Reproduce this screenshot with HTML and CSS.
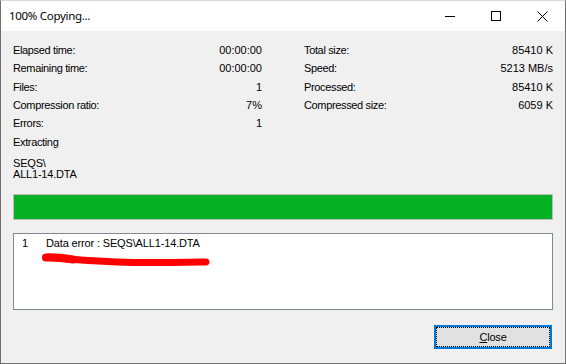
FILE: index.html
```html
<!DOCTYPE html>
<html lang="en">
<head>
    <meta charset="UTF-8">
    <title>100% Copying...</title>
    <link rel="stylesheet" href="styles.css">
</head>
<body>
    <div class="window">
        <div class="titlebar">
            <span class="title">100% Copying...</span>
            <div class="caption-buttons">
                <div class="caption-btn">
                    <svg width="10" height="10" viewBox="0 0 10 10"><path d="M0 5.5H10" stroke="#000" stroke-width="1"/></svg>
                </div>
                <div class="caption-btn">
                    <svg width="10" height="10" viewBox="0 0 10 10"><rect x="0.5" y="0.5" width="9" height="9" fill="none" stroke="#000" stroke-width="1"/></svg>
                </div>
                <div class="caption-btn">
                    <svg width="11" height="11" viewBox="0 0 11 11"><path d="M0.5 0.5L10.5 10.5M10.5 0.5L0.5 10.5" stroke="#000" stroke-width="1"/></svg>
                </div>
            </div>
        </div>

        <div class="client">
            <div class="stats">
                <div class="col">
                    <div class="row"><span class="label">Elapsed time:</span><span>00:00:00</span></div>
                    <div class="row"><span class="label">Remaining time:</span><span>00:00:00</span></div>
                    <div class="row"><span class="label">Files:</span><span>1</span></div>
                    <div class="row"><span class="label">Compression ratio:</span><span>7%</span></div>
                    <div class="row"><span class="label">Errors:</span><span>1</span></div>
                    <div class="row"><span class="label">Extracting</span></div>
                </div>
                <div class="col">
                    <div class="row"><span class="label">Total size:</span><span>85410 K</span></div>
                    <div class="row"><span class="label">Speed:</span><span>5213 MB/s</span></div>
                    <div class="row"><span class="label">Processed:</span><span>85410 K</span></div>
                    <div class="row"><span class="label">Compressed size:</span><span>6059 K</span></div>
                </div>
            </div>

            <div class="path">SEQS\<br>ALL1-14.DTA</div>

            <div class="progress">
                <div class="progress-fill" style="width: 100%;"></div>
            </div>

            <div class="log">
                <div class="log-row"><span class="log-num">1</span><span class="log-text">Data error : SEQS\ALL1-14.DTA</span></div>
                <svg class="scribble" width="172" height="18" viewBox="40 250 172 18">
                    <path d="M45 256.5 C 70 258, 100 261, 140 261.5 S 190 260.5, 205 261" fill="none" stroke="#ff0000" stroke-width="7" stroke-linecap="round"/>
                    <path d="M45 256.5 C 52 256, 62 257, 72 258.5" fill="none" stroke="#ff0000" stroke-width="8" stroke-linecap="round"/>
                </svg>
            </div>

            <div class="actions">
                <button class="btn"><span class="btn-focus"><u>C</u>lose</span></button>
            </div>
        </div>
    </div>
</body>
</html>
```

FILE: styles.css
```css
* {
    box-sizing: border-box;
    margin: 0;
    padding: 0;
}

html, body {
    width: 566px;
    height: 364px;
    overflow: hidden;
}

body {
    background: #f0f0f0;
    font-family: "Liberation Sans", Arial, sans-serif;
    font-size: 11px;
    color: #000;
}

.window {
    width: 566px;
    height: 364px;
    border: 1px solid #707070;
    border-top-color: #d8d8d8;
    background: #f0f0f0;
    display: flex;
    flex-direction: column;
}

.titlebar {
    height: 30px;
    background: #fff;
    display: flex;
    align-items: center;
    justify-content: space-between;
}

.title {
    padding-left: 8px;
    font-family: "Noto Sans", "Open Sans", sans-serif;
    font-size: 11.5px;
    letter-spacing: -0.3px;
    line-height: 30px;
}

.caption-buttons {
    display: flex;
    height: 30px;
}

.caption-btn {
    width: 46px;
    height: 30px;
    display: flex;
    align-items: center;
    justify-content: center;
}

.caption-btn svg {
    display: block;
}

.client {
    flex: 1;
    padding: 10px 12px 0 12px;
    display: flex;
    flex-direction: column;
}

.stats {
    display: grid;
    grid-template-columns: 249px 249px;
    column-gap: 42px;
}

.row {
    display: flex;
    justify-content: space-between;
    height: 18.33px;
    line-height: 18.33px;
    white-space: nowrap;
}

.label {
    letter-spacing: -0.35px;
}

.path {
    margin-top: 7px;
    line-height: 11px;
    letter-spacing: -0.2px;
}

.progress {
    margin-top: 14px;
    height: 26px;
    border: 1px solid #bcbcbc;
    background: #e6e6e6;
}

.progress-fill {
    height: 100%;
    background: #06b025;
}

.log {
    position: relative;
    margin-top: 13px;
    height: 77px;
    border: 1px solid #828790;
    background: #fff;
    padding-left: 8px;
}

.log-row {
    display: flex;
    line-height: 18px;
    white-space: nowrap;
}

.log-num {
    width: 24px;
}

.log-text {
    letter-spacing: -0.15px;
}

.scribble {
    position: absolute;
    left: 27px;
    top: 17px;
}

.actions {
    margin-top: 15px;
    display: flex;
    justify-content: flex-end;
    padding-right: 1px;
}

.btn {
    width: 118px;
    height: 24px;
    border: 2px solid #0078d7;
    background: #e1e1e1;
    font-family: "Liberation Sans", Arial, sans-serif;
    font-size: 11px;
    color: #000;
    padding: 0;
    display: flex;
}

.btn-focus {
    flex: 1;
    border: 1px dotted #000;
    display: flex;
    align-items: center;
    justify-content: center;
    letter-spacing: -0.2px;
}

.btn-focus u {
    text-decoration: underline;
}
```
